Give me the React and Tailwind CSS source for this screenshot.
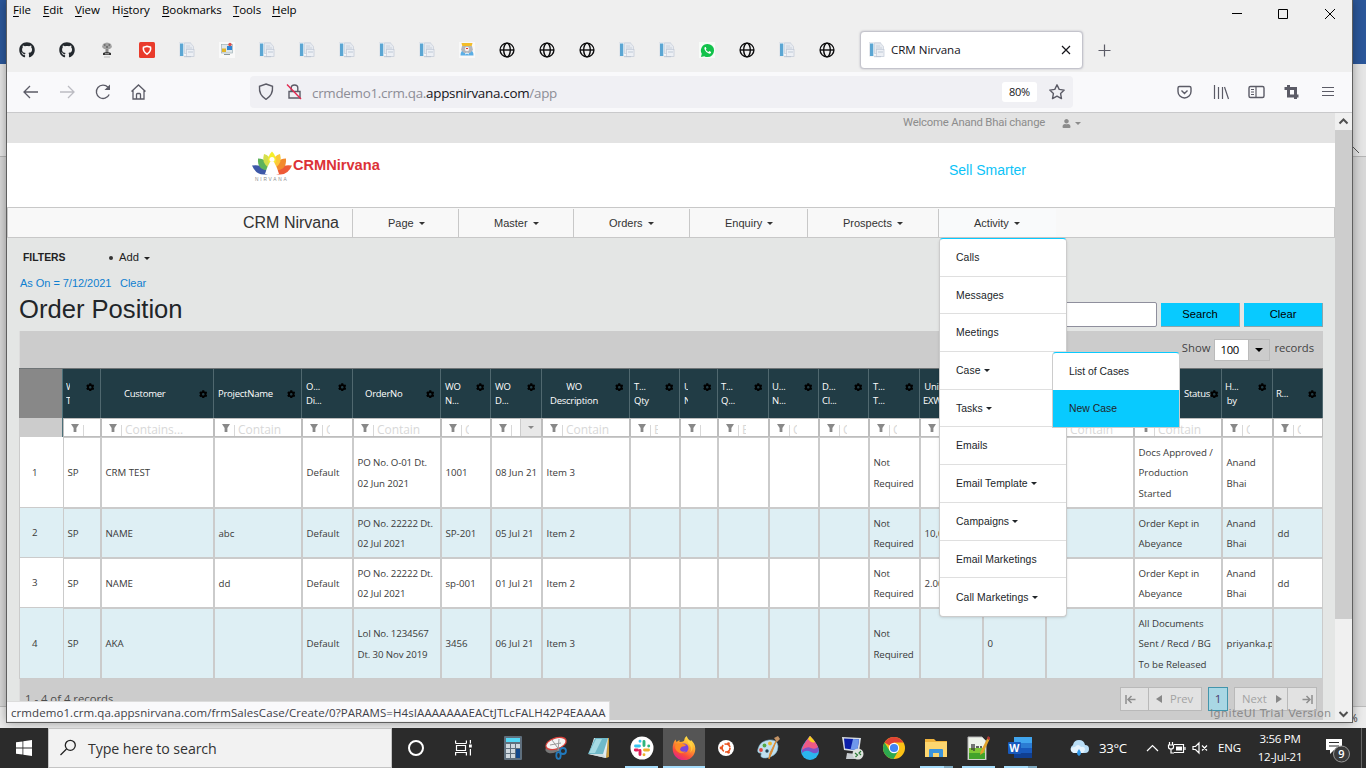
import React from 'react';
import { FaGithub, FaUser, FaCog } from 'react-icons/fa';

const GRID =
  'grid grid-cols-[44px_38px_113px_88px_51px_88px_50px_51px_88px_50px_38px_51px_50px_50px_51px_63px_63px_88px_88px_51px_50px]';

function Caret({ className = '' }) {
  return <span className={`inline-block h-0 w-0 border-x-[3px] border-t-[3px] border-x-transparent border-t-current ${className}`} />;
}

/* ---------- tab icons ---------- */

const DocIcon = () => (
  <svg width="16" height="16" viewBox="0 0 16 16" className="shrink-0">
    <rect x="0.5" y="0.5" width="11" height="13.5" fill="#f4f7fa" stroke="#d9dee4" strokeWidth=".6" />
    <rect x="1" y="1.5" width="3.3" height="12.5" fill="#5ba6d3" />
    <path d="M5.500 1h6l3 3.500v7h-9z" fill="#e6eaf0" stroke="#c6cdd8" strokeWidth=".7" />
    <path d="M7 4h4M7 6h6" stroke="#c3ccd7" strokeWidth=".8" />
    <rect x="7.500" y="7.500" width="7.500" height="7" fill="#edf0f5" stroke="#c1c9d6" strokeWidth=".7" />
    <path d="M9 10h5M5 14.700h7" stroke="#b4bfce" strokeWidth=".8" />
  </svg>
);

const GlobeIcon = () => (
  <svg width="16" height="16" viewBox="0 0 16 16" fill="none" stroke="#0c0c0d" strokeWidth="1.400">
    <circle cx="8" cy="8" r="6.900" />
    <ellipse cx="8" cy="8" rx="3.300" ry="6.900" />
    <path d="M1 8h14" />
  </svg>
);

const EmblemIcon = () => (
  <svg width="16" height="16" viewBox="0 0 16 16">
    <path d="M4 2q4-3 8 0l1 3-2 2H5L3 5z" fill="#a2a2a2" />
    <path d="M5 3h1.500M9.500 3H11M7 5h2" stroke="#444" />
    <path d="M6.500 7h3v3h-3z" fill="#888" />
    <path d="M4 11q4-2 8 0v2H4z" fill="#333" />
    <path d="M6 11.800h4" stroke="#ddd" strokeWidth=".8" />
    <path d="M5 15h6" stroke="#bbb" />
  </svg>
);

const ShieldRedIcon = () => (
  <svg width="16" height="16" viewBox="0 0 16 16">
    <rect width="16" height="16" rx="1.500" fill="#e93b2b" />
    <path d="M4.500 5.200 8 4.300l3.500.9q1 3.800-3.500 7-4.500-3.200-3.500-7z" fill="none" stroke="#fff" strokeWidth="1.600" />
  </svg>
);

const ScreenIcon = () => (
  <svg width="16" height="16" viewBox="0 0 16 16">
    <rect width="16" height="16" fill="#f9f9f9" />
    <rect x="2.500" y="2.500" width="11" height="8.500" fill="#dfe7ea" stroke="#9fb0b5" strokeWidth=".7" />
    <rect x="8" y="4" width="5" height="4" fill="#2f86d6" />
    <path d="M3 6.500h4V10H3z" fill="#e3b62b" />
    <circle cx="11" cy="2.500" r="1.700" fill="#d9534f" />
    <path d="M5 12.500h6" stroke="#8a989c" />
  </svg>
);

const AvatarIcon = () => (
  <svg width="16" height="16" viewBox="0 0 16 16">
    <rect width="16" height="16" fill="#f8f8f8" />
    <path d="M1.500 13.500q0-5 3.500-5.500h6q3.500.5 3.500 5.500z" fill="#5aaee6" />
    <path d="M3 4h10l1 4-3 3H5L2 8z" fill="#b3b6bc" />
    <path d="M2.500 1h11l-.8 3H3.300z" fill="#f3bd2a" />
    <circle cx="8" cy="7" r="2.200" fill="#f6f0ee" />
    <path d="M7 6.500h2" stroke="#d33" />
    <path d="m6 12 2-1 2 1" stroke="#fff" fill="none" />
  </svg>
);

const WhatsIcon = () => (
  <span className="flex h-4 w-4 items-center justify-center bg-[#f7fbf8]">
    <svg width="15" height="15" viewBox="0 0 16 16">
      <path d="M8 1a7 7 0 0 1 0 14q-2 0-3.400-.9L1 15l.9-3.500A7 7 0 0 1 8 1z" fill="#12c24b" />
      <path d="M5.300 4.300q-1 .8-.5 2.300 1.200 3.400 4.700 4.700 1.700.3 2.200-1l.1-.8-1.900-.9-.9 1q-2-.7-2.800-2.700l.7-.9-.8-1.800z" fill="#fff" />
    </svg>
  </span>
);

const GitIcon = () => <FaGithub size={16} color="#24292e" />;

const TABS = [
  GitIcon, GitIcon, EmblemIcon, ShieldRedIcon, DocIcon, ScreenIcon, DocIcon, DocIcon, DocIcon, DocIcon, DocIcon,
  AvatarIcon, GlobeIcon, GlobeIcon, GlobeIcon, DocIcon, DocIcon, WhatsIcon, GlobeIcon, DocIcon, GlobeIcon,
];

/* ---------- browser chrome ---------- */

function MenuBar() {
  const items = [
    ['', 'F', 'ile', 'w-[30px]'],
    ['', 'E', 'dit', 'w-[32px]'],
    ['', 'V', 'iew', 'w-[37px]'],
    ['Hi', 's', 'tory', 'w-[50px]'],
    ['', 'B', 'ookmarks', 'w-[71px]'],
    ['', 'T', 'ools', 'w-[39px]'],
    ['', 'H', 'elp', 'w-[40px]'],
  ];
  return (
    <div className="flex h-5 pl-[6px] text-[11.5px] leading-5 tracking-[-0.1px] text-black">
      {items.map(([a, u, b, w]) => (
        <span key={b} className={`${w} shrink-0 whitespace-nowrap`}>
          {a}
          <span className="underline underline-offset-2">{u}</span>
          {b}
        </span>
      ))}
      <svg className="ml-auto mr-[16px] mt-[8px] shrink-0" width="104" height="12" viewBox="0 0 104 12" stroke="#000" fill="none">
        <path d="M0 5.500h10M46.500 1.500h9v9h-9zM93 1l10 10M103 1 93 11" />
      </svg>
    </div>
  );
}

function TabStrip() {
  return (
    <div className="mt-[8px] flex h-[44px] items-center">
      {TABS.map((Icon, i) => (
        <span key={i} className="flex w-10 shrink-0 items-center justify-center">
          <Icon />
        </span>
      ))}
      <div className="ml-[13px] flex h-[38px] w-[223px] items-center rounded border border-[#c4c4cc] bg-white pl-2 shadow-[0_0_2px_rgba(120,120,140,0.5)]">
        <DocIcon />
        <span className="ml-[6px] text-[11.6px] tracking-[-0.05px] text-[#15141a]">CRM Nirvana</span>
        <svg className="ml-auto mr-[11px]" width="10" height="10" viewBox="0 0 10 10" stroke="#15141a" strokeWidth="1.200">
          <path d="m1 1 8 8M9 1 1 9" />
        </svg>
      </div>
      <svg className="ml-[15px]" width="13" height="13" viewBox="0 0 13 13" stroke="#5b5b66" strokeWidth="1.200">
        <path d="M6.500 .5v12M.5 6.500h12" />
      </svg>
    </div>
  );
}

function NavToolbar() {
  return (
    <div className="flex h-[41px] items-center border-b border-[#c9c9cb] bg-[#f9f9fb]">
      <svg width="140" height="20" viewBox="0 0 140 20" fill="none" stroke="#5b5b66" strokeWidth="1.300" className="ml-[14px] shrink-0">
        <path d="M17 10H3m6-6-6 6 6 6" />
        <path d="M39 10h14m-6-6 6 6-6 6" stroke="#bcbcc2" />
        <path d="M88.200 12.500A6.700 6.700 0 1 1 87 5.200" />
        <path d="M83.500 8h5.500V2.500z" fill="#5b5b66" stroke="none" />
        <path d="m110.500 9.500 7-6.500 7 6.500M112 8.500V17h11V8.500M115.500 17v-4.500q0-1 1-1h2q1 0 1 1V17" />
      </svg>
      <div className="ml-[89px] flex h-8 w-[823px] items-center rounded bg-[#f0f0f4]">
        <svg width="50" height="20" viewBox="0 0 50 20" fill="none" stroke="#5b5b66" strokeWidth="1.400" className="ml-1 shrink-0">
          <path d="m12 2 6.500 2.300q.8 9-6.500 13-7.300-4-6.500-13z" />
          <path d="M35 9.500h11V16H35zM37.200 9V6q0-3 3.300-3t3.300 3v3" />
          <path d="M33 2.500 47 17" stroke="#e22850" />
        </svg>
        <span className="ml-[8px] mt-[2px] text-[13.400px] tracking-[-0.280px] text-[#8d8d96]">
          crmdemo1.crm.qa.<span className="text-[#15141a]">appsnirvana.com</span>/app
        </span>
        <span className="ml-auto flex h-5 w-[35px] items-center justify-center rounded-[3px] bg-white pt-px text-[11px] tracking-[-0.3px] text-[#15141a]">80%</span>
        <svg className="ml-[11px] mr-[7px]" width="18" height="18" viewBox="0 0 18 18" fill="none" stroke="#5b5b66" strokeWidth="1.400" strokeLinejoin="round">
          <path d="m9 1.800 2.200 4.600 5 .7-3.600 3.500.9 5L9 13.200l-4.500 2.400.9-5L1.800 7.100l5-.7z" />
        </svg>
      </div>
      <svg className="ml-[103px] shrink-0" width="164" height="20" viewBox="0 0 164 20" fill="none" stroke="#5b5b66" strokeWidth="1.400">
        <path d="M3.500 4.500h10q1.500 0 1.500 1.500v3.500a6.500 6.500 0 0 1-13 0V6q0-1.500 1.500-1.500zM5.500 8.500l3 3 3-3" />
        <path d="M38.500 3v14M42.500 5v12M46.500 5v12M48.500 5l4 12" strokeWidth="1.200" />
        <rect x="73" y="4.500" width="15" height="11" rx="1.500" />
        <path d="M80 4.500v11M75 7.500h3M75 10h3M75 12.500h3" strokeWidth="1.200" />
        <path d="M112.500 3v11h10M108.500 6.500h11V17" strokeWidth="3" />
        <path d="M146 5.500h12M146 9.500h12M146 13.500h12" strokeWidth="1.200" />
      </svg>
    </div>
  );
}

/* ---------- CRM page ---------- */

function LotusLogo() {
  return (
    <svg width="41" height="31" viewBox="0 0 41 31" className="shrink-0">
      <path d="M0 14.500q7-1 12 1.500 3 2 4 7-11 3-16-8.500z" fill="#3d58a8" />
      <path d="M40 14.500q-7-1-12 1.500-3 2-4 7 11 3 16-8.500z" fill="#ee5a36" />
      <path d="M6 7.500q6 0 9 4l2 8q-12 0-11-12z" fill="#5fb35a" />
      <path d="M34 7.500q-6 0-9 4l-2 8q12 0 11-12z" fill="#f28a2d" />
      <path d="M12 3q6 1.500 7 8l-2 6q-8-5-5-14z" fill="#d5df4c" />
      <path d="M28 3q-6 1.500-7 8l2 6q8-5 5-14z" fill="#fbc93a" />
      <path d="M20 .5q5 5 3.500 11h-7Q15 5.500 20 .5z" fill="#f6ee2b" />
      <circle cx="20" cy="8.500" r="2.500" fill="#fff" />
      <path d="M18 11h4l3 6 2 6H13l2-6z" fill="#fff" />
      <text x="3" y="29.500" fontSize="4.800" letterSpacing="1.800" fill="#8b8b8b" fontFamily="Liberation Sans, sans-serif">NIRVANA</text>
    </svg>
  );
}

function PageHeader() {
  return (
    <>
      <div className="flex h-[30px] bg-[#e3e3e3] pl-[896px] font-['Roboto',sans-serif] text-[11.300px] leading-[20px] tracking-[-0.180px] text-[#8c8c8c]">
        <span className="w-[159px]">Welcome Anand Bhai change</span>
        <FaUser size={9} className="mt-[6px]" />
        <Caret className="ml-1 mt-[9px]" />
      </div>
      <div className="flex h-[64px] bg-white pl-[245px]">
        <div className="flex w-[697px] pt-[8px]">
          <LotusLogo />
          <span className="mt-[5px] text-[14.6px] font-bold leading-[18px] text-[#dc3237]">CRMNirvana</span>
        </div>
        <span className="mt-[18px] text-[14px] leading-[18px] text-[#0cc3f7]">Sell Smarter</span>
      </div>
    </>
  );
}

const NAV = [
  ['Page', 'w-[106px]'],
  ['Master', 'w-[115px]'],
  ['Orders', 'w-[116px]'],
  ['Enquiry', 'w-[118px]'],
  ['Prospects', 'w-[131px]'],
  ['Activity', 'w-[118px] bg-[#f9fafb]'],
];

function NavBar() {
  return (
    <div className="flex h-[31px] items-center border border-[#c8c8c8] bg-[#f8f8f8] text-[#333]">
      <span className="w-[344px] pl-[235px] text-[16px] leading-[27px]">CRM Nirvana</span>
      {NAV.map(([name, cls]) => (
        <span key={name} className={`${cls} flex h-[28px] items-center gap-[5px] border-l border-[#c8c8c8] pl-[35px] pt-[2px] text-[11px]`}>
          {name}
          <Caret />
        </span>
      ))}
    </div>
  );
}

const HEADERS = [
  { lines: ['W', 'T'], pad: 'pl-[3px]', clip: 'w-[4px] overflow-hidden', filter: '' },
  { lines: ['Customer'], pad: 'pl-[23px]', filter: 'Contains...' },
  { lines: ['ProjectName'], pad: 'pl-[4px]', filter: 'Contain' },
  { lines: ['O...', 'Di...'], pad: 'pl-[4px]', filter: 'C' },
  { lines: ['OrderNo'], pad: 'pl-[12px]', filter: 'Contain' },
  { lines: ['WO', 'N...'], pad: 'pl-[4px]', filter: 'C' },
  { lines: ['WO', 'D...'], pad: 'pl-[4px]', filter: 'date' },
  { lines: ['WO', 'Description'], pad: 'pl-[8px]', clip: 'text-center', filter: 'Contain' },
  { lines: ['T...', 'Qty'], pad: 'pl-[4px]', filter: 'E' },
  { lines: ['U', 'N'], pad: 'pl-[4px]', clip: 'w-[4px] overflow-hidden', filter: '' },
  { lines: ['T...', 'Q...'], pad: 'pl-[3px]', filter: 'E' },
  { lines: ['U...', 'N...'], pad: 'pl-[3px]', filter: 'C' },
  { lines: ['D...', 'Cl...'], pad: 'pl-[3px]', filter: 'C' },
  { lines: ['T...', 'T...'], pad: 'pl-[4px]', filter: 'C' },
  { lines: ['Unit', 'EXW'], pad: 'pl-[3px]', filter: '', clip: 'text-right' },
  { lines: [''], pad: 'pl-[4px]', filter: '' },
  { lines: [''], pad: 'pl-[12px]', filter: 'Contain' },
  { lines: ['Status'], pad: 'pl-[50px]', filter: 'Contain' },
  { lines: ['H...', 'by'], pad: 'pl-[3px]', clip: 'text-center', filter: 'C' },
  { lines: ['R...'], pad: 'pl-[3px]', filter: 'C' },
];

function HeaderRow() {
  return (
    <div className={`${GRID} h-[50px] border-t border-[#6f7476] bg-[#213c45] text-[9.500px] leading-[14.500px] tracking-[-0.250px] text-white`}>
      <span className="border-r border-[#4c7079] bg-[#888]" />
      {HEADERS.map((h, i) => (
        <span key={i} className={`flex items-center overflow-hidden whitespace-nowrap border-r border-[#50686f] pr-[6px] pt-px ${h.pad}`}>
          <span className={h.clip || ''}>
            {h.lines.map((l, j) => (
              <span key={j} className="block">{l}</span>
            ))}
          </span>
          <FaCog size={8.500} className={`ml-auto shrink-0 text-black ${h.lines.length > 1 ? '-mt-[14px]' : ''}`} />
        </span>
      ))}
    </div>
  );
}

function Funnel() {
  return (
    <svg width="8" height="8" viewBox="0 0 8 8" fill="#888" className="ml-[6.500px] mt-[5px] shrink-0">
      <path d="M0 0h8L5.400 4v4H2.600V4z" />
    </svg>
  );
}

function FilterRow() {
  return (
    <div className={`${GRID} h-[19px] text-[12px] tracking-[-0.050px] text-[#d8d8d8]`}>
      <span className="border-r border-[#4c7079] bg-[#ccc]" />
      {HEADERS.map((h, i) => (
        <span key={i} className="flex overflow-hidden whitespace-nowrap border border-[#bdbdbd] bg-white">
          <Funnel />
          <span className="ml-[4px] mt-[6px] h-[12px] w-px shrink-0 bg-[#d8d8d8]" />
          {h.filter === 'date' ? (
            <span className="ml-auto flex w-[21px] items-center justify-center border-l border-[#ccc] bg-[#e8e8e8] text-[#888]">
              <Caret />
            </span>
          ) : (
            <span className={`ml-[3.500px] h-full overflow-hidden leading-[22px] ${h.filter.length === 1 ? 'w-[4px]' : ''}`}>{h.filter}</span>
          )}
        </span>
      ))}
    </div>
  );
}

const ROWS = [
  { h: 'h-[71px]', c: ['1', 'SP', 'CRM TEST', '', 'Default', 'PO No. O-01 Dt.\n02 Jun 2021', '1001', '08 Jun 21', 'Item 3', '', '', '', '', '', 'Not\nRequired', '', '', '', 'Docs Approved /\nProduction\nStarted', 'Anand\nBhai', ''] },
  { h: 'h-[50px]', c: ['2', 'SP', 'NAME', 'abc', 'Default', 'PO No. 22222 Dt.\n02 Jul 2021', 'SP-201', '05 Jul 21', 'Item 2', '', '', '', '', '', 'Not\nRequired', '10,0', '', '', 'Order Kept in\nAbeyance', 'Anand\nBhai', 'dd'] },
  { h: 'h-[50px]', c: ['3', 'SP', 'NAME', 'dd', 'Default', 'PO No. 22222 Dt.\n02 Jul 2021', 'sp-001', '01 Jul 21', 'Item 2', '', '', '', '', '', 'Not\nRequired', '2.00', '', '', 'Order Kept in\nAbeyance', 'Anand\nBhai', 'dd'] },
  { h: 'h-[71px]', c: ['4', 'SP', 'AKA', '', 'Default', 'LoI No. 1234567\nDt. 30 Nov 2019', '3456', '06 Jul 21', 'Item 3', '', '', '', '', '', 'Not\nRequired', '', '0', '', 'All Documents\nSent / Recd / BG\nTo be Released', 'priyanka.patel', ''] },
];

function BodyRow({ row, alt }) {
  return (
    <div className={`${GRID} ${row.h} ${alt ? 'bg-[#deeff4]' : 'bg-white'} text-[9.700px] leading-[20.400px] tracking-[-0.020px] text-[#3a3a3a]`}>
      {row.c.map((t, i) => (
        <span
          key={i}
          className={`flex items-center overflow-hidden whitespace-pre border-[#cbcbcb] pt-[2px] ${i === 0 ? 'border-b border-l pl-[12px]' : 'border pl-[3.500px]'} ${i === 5 || i === 14 ? 'tracking-[-0.120px]' : ''}`}
        >
          {t}
        </span>
      ))}
    </div>
  );
}

function Pager() {
  const box = 'flex h-6 items-center border border-[#b9b9b9] bg-[#e2e2e2] text-[#a3a3a3]';
  return (
    <div className="flex h-[41px] items-start border-l border-[#ddd] bg-[#ccc] pl-[5px] pt-[8px] text-[11.6px]">
      <span className="pt-[4px] text-[11.300px] text-[#4c4c4c]">1 - 4 of 4 records</span>
      <div className="ml-auto mr-[6px] flex">
        <span className={`${box} w-[29px] pl-[4px]`}>
          <svg width="11" height="9" viewBox="0 0 11 9" fill="none" stroke="#8e8e8e" strokeWidth="1.500"><path d="M1 0v9M10.500 4.500H3M6.500 1 3 4.500 6.500 8" /></svg>
        </span>
        <span className={`${box} w-[53px] border-l-0 pl-[7px]`}>
          <svg width="6" height="8" viewBox="0 0 6 8" fill="#888"><path d="M6 0v8L0 4z" /></svg>
          <span className="ml-[8px] pt-px text-[11.200px]">Prev</span>
        </span>
        <span className="ml-[6px] flex h-6 w-5 items-center justify-center border border-[#4295ac] bg-[#a9d7e4] text-[#4a3a6b]">1</span>
        <span className={`${box} ml-[6px] w-[54px] pl-[7px]`}>
          <span className="pt-px text-[11.300px]">Next</span>
          <svg className="ml-[9px]" width="6" height="8" viewBox="0 0 6 8" fill="#888"><path d="M0 0v8l6-4z" /></svg>
        </span>
        <span className={`${box} w-[29px] border-l-0 pl-[14px]`}>
          <svg width="11" height="9" viewBox="0 0 11 9" fill="none" stroke="#8e8e8e" strokeWidth="1.500"><path d="M10 0v9M.5 4.500H8M4.500 1 8 4.500 4.500 8" /></svg>
        </span>
      </div>
    </div>
  );
}

function OrderPosition() {
  return (
    <div className="h-[482px] bg-[#e4e6e5] pl-[12px] pr-[12px] pt-[9px]">
      <div className="flex h-[22px] items-center pl-[4px] text-[11.200px] text-[#222]">
        <span className="w-[86px] text-[10.400px] font-bold">FILTERS</span>
        <span className="h-[4px] w-[4px] rounded-full bg-[#333]" />
        <span className="-mt-px ml-[6px] mr-[5px]">Add</span>
        <Caret />
      </div>
      <div className="flex h-[27px] items-center pl-[1px] pt-[1px] text-[11px] tracking-[-0.040px] text-[#0f7fd0]">
        <span className="w-[100px]">As On = 7/12/2021</span>
        <span>Clear</span>
      </div>
      <div className="flex h-[35px]">
        <h1 className="-mt-[2px] w-[900px] text-[25.600px] leading-[30px] text-[#212529]">Order Position</h1>
        <div className="ml-auto mt-[7px] flex text-[11.200px] text-black">
          <span className="mr-[4px] mt-[-1px] h-[25px] w-[157px] rounded-[2px] border border-[#8f8f9d] bg-white" />
          <span className="mr-[4px] flex h-6 w-[79px] items-center justify-center border-b border-r border-[#8aa5ac] bg-[#08caff]">Search</span>
          <span className="flex h-6 w-[79px] items-center justify-center border-b border-r border-[#8aa5ac] bg-[#08caff]">Clear</span>
        </div>
      </div>
      <div className="w-[1304px] font-['Open_Sans','Noto_Sans',sans-serif]">
        <div className="flex h-[37px] items-center justify-end border-l border-[#ddd] bg-[#ccc] pb-[3px] pr-[9px] text-[11.300px] text-[#444]">
          <span>Show</span>
          <span className="mx-[4px] mt-[3px] flex h-[22px] w-[56px] border border-[#bbb] bg-white text-black">
            <span className="w-[33px] pl-[5px] pt-[2px] tracking-[-0.300px]">100</span>
            <span className="flex flex-1 items-center justify-center border-l border-[#bbb] bg-[#ccc]">
              <span className="h-0 w-0 border-x-4 border-t-4 border-x-transparent border-t-black" />
            </span>
          </span>
          <span className="tracking-[-0.080px]">records</span>
        </div>
        <HeaderRow />
        <FilterRow />
        {ROWS.map((r, i) => (
          <BodyRow key={i} row={r} alt={i % 2 === 1} />
        ))}
        <Pager />
      </div>
    </div>
  );
}

const ACTIVITY = [
  ['Calls'], ['Messages'], ['Meetings'], ['Case', true], ['Tasks', true], ['Emails'],
  ['Email Template', true], ['Campaigns', true], ['Email Marketings'], ['Call Marketings', true],
];

function ActivityMenu() {
  return (
    <div className="absolute left-[932px] top-[238px] h-[379px] w-[128px] rounded border border-[#ccc] border-t-[#08caff] bg-white text-[10.400px] text-[#212529] shadow-sm">
      {ACTIVITY.map(([name, sub], i) => (
        <div key={name} className={`flex h-[37.700px] items-center gap-[3px] pl-[16px] pt-px tracking-[0.060px] ${i < 9 ? 'border-b border-[#dfdfdf]' : ''}`}>
          {name}
          {sub && <Caret />}
        </div>
      ))}
      <div className="absolute left-[112px] top-[113px] h-[76px] w-[128px] overflow-hidden rounded-t border border-[#ccc] border-t-[#08caff] bg-white">
        <div className="flex h-[37px] items-center pl-[16px]">List of Cases</div>
        <div className="flex h-[38px] items-center bg-[#08caff] pl-[16px]">New Case</div>
      </div>
    </div>
  );
}

function Browser() {
  return (
    <div className="absolute left-[6px] top-0 h-[723px] w-[1347px] border-x border-b border-[#5f5f5f] bg-[#efefef] font-['Open_Sans','Noto_Sans',sans-serif] shadow-[0_0_10px_rgba(0,0,0,0.35)]">
      <MenuBar />
      <TabStrip />
      <NavToolbar />
      <div className="flex h-[607px] overflow-hidden font-['Liberation_Sans',Arial,sans-serif]">
        <div className="h-full w-[1328px] shrink-0 overflow-hidden">
          <PageHeader />
          <NavBar />
          <OrderPosition />
        </div>
        <div className="flex w-[17px] flex-col bg-[#f0f0f0]">
          <svg width="17" height="17" viewBox="0 0 17 17" fill="none" stroke="#505050" strokeWidth="2"><path d="m4.500 10.500 4-4 4 4" /></svg>
          <div className="h-[489px] bg-[#cdcdcd]" />
          <svg className="mt-[88px]" width="17" height="13" viewBox="0 0 17 13" fill="none" stroke="#505050" strokeWidth="2"><path d="m4.500 5 4 4 4-4" /></svg>
        </div>
      </div>
      <div className="font-['Liberation_Sans',Arial,sans-serif]">
        <ActivityMenu />
      </div>
      <span className="absolute left-[1203px] top-[706px] whitespace-nowrap font-['DejaVu_Sans',sans-serif] text-[11.200px] leading-[16px] tracking-[0.320px] text-[#777]/80">IgniteUI Trial Version</span>
      <div className="absolute left-0 top-[701px] h-[20px] w-[603px] whitespace-nowrap border-r border-t border-[#dcdcdc] bg-[#f9f9fb] pl-[4px] text-[11.500px] leading-[21px] tracking-[0.070px] text-[#3e3e46]">
        crmdemo1.crm.qa.appsnirvana.com/frmSalesCase/Create/0?PARAMS=H4sIAAAAAAAEACtJTLcFALH42P4EAAAA
      </div>
    </div>
  );
}

/* ---------- taskbar ---------- */

const Ic = ({ children }) => (
  <svg width="24" height="24" viewBox="0 0 24 24" fill="none">{children}</svg>
);

const Calc = () => (
  <Ic>
    <rect x="3" width="18" height="24" rx="1" fill="#5f6f7d" />
    <rect x="5" y="2" width="14" height="4" fill="#54d7f5" />
    {[8, 13, 18].map((y) => [5, 10, 15].map((x) => <rect key={`${x}-${y}`} x={x} y={y} width="4" height="4" fill="#cfd8df" />))}
    <path d="M15 13h4v9h-4z" fill="#12488c" />
  </Ic>
);
const Snip = () => (
  <Ic>
    <ellipse cx="10" cy="11.500" rx="9" ry="5" transform="rotate(-22 10 11.500)" fill="#777" />
    <ellipse cx="12" cy="7.500" rx="10.500" ry="5.500" transform="rotate(-18 12 7.500)" fill="#f5f5f5" stroke="#d8413b" strokeWidth="1.300" />
    <path d="m8 4 8 11M15 3l-1 12M6 9l11-2" stroke="#999" />
    <circle cx="19" cy="15" r="3" stroke="#2179bd" strokeWidth="1.800" />
    <ellipse cx="14.500" cy="19.500" rx="2.200" ry="3.300" stroke="#2179bd" strokeWidth="1.800" />
  </Ic>
);
const Note = () => (
  <Ic>
    <path d="M20 2h2v19l-3 1z" fill="#c99b3d" />
    <path d="M7 2h14l-2 20-17-4z" fill="#e3edf0" />
    <path d="M8 2h13l-5 16H1z" fill="#6fb9c9" />
    <path d="M9 3h6L8 17H2z" fill="#a5dbe4" />
    <path d="M1 18h15l3 4z" fill="#cfdde0" />
  </Ic>
);
const Slack = () => (
  <Ic>
    <circle cx="12" cy="12" r="11.500" fill="#fff" />
    <g strokeWidth="2.900" strokeLinecap="round">
      <path d="M5.500 10h4M10 5.300h.01" stroke="#36c5f0" />
      <path d="M14 5.500v4M18.700 10h.01" stroke="#2eb67d" />
      <path d="M14.500 14h4M14 18.700h.01" stroke="#ecb22e" />
      <path d="M10 14.500v4M5.300 14h2" stroke="#e01e5a" />
    </g>
  </Ic>
);
const Firefox = () => (
  <Ic>
    <defs>
      <linearGradient id="ffx" x1="18" y1="1" x2="6" y2="23" gradientUnits="userSpaceOnUse">
        <stop stopColor="#ffe84a" /><stop offset=".4" stopColor="#ffa12c" /><stop offset=".75" stopColor="#fb4a3c" /><stop offset="1" stopColor="#e0238c" />
      </linearGradient>
    </defs>
    <path d="M14.500 0q1 3 4 5l.5-1q4.500 4 4.300 9A11.300 11.300 0 0 1 .7 13Q.5 7 3.500 3.500L4.500 6l3-2v2q3 0 4.500-1 0-3 2.500-5z" fill="url(#ffx)" />
    <circle cx="12" cy="12" r="4.500" fill="#7a45dd" />
    <path d="M3.500 9q4-3 8-1 2 1 3 .5-1 2-3.500 2T8 14q2 3 6 1-4 4-8 1T3.500 9z" fill="#ff8c24" />
    <path d="M16 7q5 4 2 10 4-4 2-9l-4-4z" fill="#ffe04a" opacity=".6" />
  </Ic>
);
const Ubuntu = () => (
  <Ic>
    <circle cx="12" cy="12" r="8" fill="#fff" />
    <circle cx="12" cy="12" r="4" stroke="#e95420" strokeWidth="1.700" strokeDasharray="7 1.400" />
    <circle cx="7" cy="12" r="1.400" fill="#e95420" /><circle cx="14.500" cy="7.700" r="1.400" fill="#e95420" /><circle cx="14.500" cy="16.300" r="1.400" fill="#e95420" />
  </Ic>
);
const Paint = () => (
  <Ic>
    <path d="M2 13Q4 5 13 4q8-1 9 6 0 10-12 12-6 0-5-3 1-3-2-2-2-1-1-4z" fill="#bfe0ef" stroke="#7fb5cf" strokeWidth=".6" />
    <circle cx="5" cy="14" r="1.900" fill="#e0483f" /><circle cx="8.500" cy="9.500" r="1.900" fill="#54a944" /><circle cx="14" cy="7.500" r="1.900" fill="#eeb52e" /><circle cx="11" cy="15" r="1.700" fill="#245" />
    <path d="m21 3-5 13-3 7q0-5 2-8z" fill="#d98b35" stroke="#d98b35" />
    <path d="m18 2 4-2 2 3-3 3z" fill="#c29265" />
  </Ic>
);
const Paint3D = () => (
  <Ic>
    <path d="M12 0q9 10 9 15a9 9 0 0 1-18 0Q3 10 12 0z" fill="#2bb5ee" />
    <path d="M12 0q9 10 9 15-3 4-8 1T4 17q-2-5 8-17z" fill="#7b54c8" />
    <path d="M12 0q6 6 8 11-3 3-7 1t-9 2Q4 10 12 0z" fill="#ee5a86" />
    <path d="M12 0q4 4 5 6-3 2-7-3z" fill="#f8d31c" />
  </Ic>
);
const Rdp = () => (
  <Ic>
    <path d="m2 1 19 1-2 14-15-2z" fill="#d8dde3" />
    <path d="m4 2.500 15 .8-1.500 11L5 12.500z" fill="#0b1ea8" />
    <path d="m13 3 6 .3-1.500 11-7-.8z" fill="#6f98ec" />
    <path d="m7 17 9 1-1 5H6z" fill="#c8ccd0" />
    <circle cx="18" cy="18" r="5.500" fill="#dfe3df" />
    <path d="m15 17 2.500 2-2 2M21 15l-2 2 2 2" stroke="#2b7a36" strokeWidth="1.200" />
  </Ic>
);
const Chrome = () => (
  <Ic>
    <circle cx="12" cy="12" r="11" fill="#fbc116" />
    <path d="M12 12 2.500 6.500a11 11 0 0 1 19 0H12z" fill="#e04335" />
    <path d="M2.500 6.500a11 11 0 0 0 9 16.500L16.500 14.500 12 12l-4.500 2.500z" fill="#2da94f" />
    <circle cx="12" cy="12" r="5.200" fill="#fff" /><circle cx="12" cy="12" r="4.100" fill="#4285f4" />
  </Ic>
);
const Explorer = () => (
  <Ic>
    <path d="M1 3h9l2 2h11v16H1z" fill="#f0b33c" />
    <path d="M1 6h22v15H1z" fill="#fdd66f" />
    <path d="M5 14q0-1 1-1h12q1 0 1 1v7h-4v-4H9v4H5z" fill="#3b94dc" />
  </Ic>
);
const Npp = () => (
  <Ic>
    <path d="M2 1h14l4 4v19H2z" fill="#eef3ea" stroke="#b5b5b5" />
    <path d="M3 12h16v11H3z" fill="#7fc836" /><path d="M3 17h16v6H3z" fill="#42a32b" />
    <path d="M6 8v6M8 8v7M10 11h3M14 11h2" stroke="#333" strokeWidth="1.300" />
    <path d="m22 1 2 1.500L17 17l-3 2 .6-3.500z" fill="#e2a32c" /><path d="m22 0 2.500 2L23 4l-2-1.300z" fill="#a33" />
  </Ic>
);
const Word = () => (
  <Ic>
    <path d="M6 1h18v6H6z" fill="#41a5ee" /><path d="M6 7h18v5H6z" fill="#2b7cd3" /><path d="M6 12h18v5H6z" fill="#185abd" /><path d="M6 17h18v5H6z" fill="#103f91" />
    <rect y="6" width="13" height="12" rx="1" fill="#185abd" />
    <text x="1.200" y="15.700" fontSize="10.500" fontWeight="700" fill="#fff" fontFamily="Open Sans, sans-serif">W</text>
  </Ic>
);

const APPS = [
  [Calc], [Snip], [Note],
  [Slack, 'on'], [Firefox, 'active'], [Ubuntu], [Paint], [Paint3D], [Rdp], [Chrome],
  [Explorer, 'multi'], [Npp, 'on'], [Word, 'multi'],
];

function Taskbar() {
  return (
    <div className="absolute left-0 top-[728px] flex h-10 w-[1366px] bg-[#2b2b2b] font-['Open_Sans','Noto_Sans',sans-serif] text-white">
      <div className="flex w-12 items-center justify-center">
        <svg width="16" height="16" viewBox="0 0 16 16" fill="#fff"><path d="M0 2.300 6.500 1.400v6.200H0zM7.300 1.300 16 0v7.600H7.300zM0 8.400h6.500v6.200L0 13.700zM7.300 8.400H16V16l-8.700-1.300z" /></svg>
      </div>
      <div className="flex h-[39.500px] w-[344px] items-center border border-[#c4c4c4] bg-[#f2f2f2]">
        <svg className="ml-[10px]" width="18" height="18" viewBox="0 0 18 18" fill="none" stroke="#222" strokeWidth="1.300"><circle cx="11.300" cy="6.300" r="5" /><path d="M7.500 10 1.500 16" /></svg>
        <span className="ml-[11px] mt-px text-[14.200px] tracking-[-0.100px] text-[#333]">Type here to search</span>
      </div>
      <div className="flex w-[48px] items-center justify-center"><span className="h-4 w-4 rounded-full border-2 border-white" /></div>
      <div className="flex w-[51px] items-center pl-[15px]">
        <svg width="17" height="16" viewBox="0 0 17 16" fill="none" stroke="#fff" strokeWidth="1.200"><path d="M.6 3.500V.5M11.400 3.500V.5M.6 3.500h10.800M1.500 5.500h9v5h-9zM.6 15.500v-3h10.800v3M15.400 0v3.500M15.400 9v6.500" /><path d="M14 4.500h2.800v3H14z" fill="#fff" stroke="none" /></svg>
      </div>
      <div className="flex">
        {APPS.map(([Icon, st], i) => (
          <div key={i} className={`flex ${i < 4 ? 'w-[43px]' : 'w-[42px]'} flex-col items-center ${st === 'active' ? 'bg-[#555]' : ''}`}>
            <div className="mt-[8px] h-[30px]"><Icon /></div>
            {st && (
              <div className={`flex h-[2px] ${st === 'active' ? 'w-full' : 'w-[33px]'} bg-[#a5dcfb]`}>
                {st === 'multi' && <span className="ml-auto w-[9px] bg-[#7fa9c0]" />}
              </div>
            )}
          </div>
        ))}
      </div>
      <div className="ml-auto flex items-center">
        <svg width="22" height="18" viewBox="0 0 22 18"><path d="M5 14a4.500 4.500 0 0 1 0-8q1-5 6-5 5 0 6 5a4 4 0 0 1 0 8z" fill="#b9def7" /><path d="M3 12q-1-4 4-4 3-4 6 0 4-1 4 3l-2 3H6z" fill="#e5f3fd" /><path d="M11 10q4 5 0 7-4-2 0-7z" fill="#2f97e8" /></svg>
        <span className="ml-[9px] mt-px w-[47px] text-[13.200px] tracking-[-0.300px]">33°C</span>
        <svg width="64" height="16" viewBox="0 0 64 16" fill="none" stroke="#fff" strokeWidth="1.200">
          <path d="m1 11 5.500-5.500L12 11" />
          <path d="M28 4.500h9.500v8H28M39 7v3M23.500 2v3M26.500 2v3M22.500 5h5v2q0 2-2.500 2t-2.500-2zM25 9v4h3" />
          <path d="M30 6.500h6v4h-6z" fill="#fff" stroke="none" />
          <path d="M47 6.500h2.500L53 3v10l-3.500-3.500H47zM56 5.500l5 5M61 5.500l-5 5" />
        </svg>
        <span className="ml-[8px] w-[34px] text-[11.500px] tracking-[-0.200px]">ENG</span>
        <div className="-mt-[1px] w-[56px] text-center text-[11.500px] leading-[18px] tracking-[-0.250px]">
          <div>3:56 PM</div>
          <div>12-Jul-21</div>
        </div>
        <svg className="ml-[17px] mt-[5px]" width="28" height="26" viewBox="0 0 28 26">
          <path d="M1 1h16v11H9l-4 4v-4H1z" fill="#fff" />
          <path d="M4 4.500h10M4 8h10" stroke="#2b2b2b" />
          <circle cx="16.500" cy="16" r="8" fill="#3b3b3b" stroke="#999" />
          <text x="13.300" y="20" fontSize="11" fill="#fff" fontFamily="Open Sans, sans-serif" fontWeight="600">9</text>
        </svg>
        <span className="ml-[8px] h-10 w-[5px] border-l border-[#666]" />
      </div>
    </div>
  );
}

export default function App() {
  return (
    <div className="relative h-[768px] w-[1366px] overflow-hidden bg-[#d2d2d2]">
      <div className="flex h-full flex-col">
        <div className="h-[64px] bg-[#2b579a]" />
        <div className="flex h-[93px] justify-end border-b border-[#b5b5b5] bg-[#e6e6e6] pt-[82px]">
          <svg width="13" height="8" viewBox="0 0 13 8" stroke="#555"><path d="m0 1 6 6" /></svg>
        </div>
        <div className="h-[549px] bg-[#d8d8d8]" />
        <div className="flex-1 border-t border-[#bbb] bg-[#ececec] pl-[1349px] pt-[3px] font-['Open_Sans',sans-serif] text-[10.500px] leading-[16px] text-[#333]">%</div>
      </div>
      <Browser />
      <Taskbar />
    </div>
  );
}
